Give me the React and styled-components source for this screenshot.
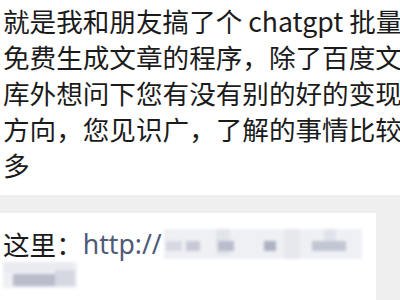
import React from "react";
import styled, { createGlobalStyle } from "styled-components";

const Global = createGlobalStyle`
  html, body { margin: 0; padding: 0; background: #ffffff; }
  body { width: 400px; height: 300px; overflow: hidden; }
`;

const Page = styled.div`
  width: 400px;
  height: 300px;
  overflow: hidden;
  background: #ffffff;
  display: flex;
  flex-direction: column;
  font-family: "Noto Sans CJK SC", "Noto Sans", sans-serif;
`;

const Post = styled.div`
  padding: 3px 0 12px 3px;
  color: #1b1b1b;
  font-size: 26.6px;
  line-height: 36px;
`;

const Line = styled.div`
  white-space: nowrap;
`;

const Band = styled.div`
  height: 18px;
  background: #efefef;
  flex-shrink: 0;
`;

const Lower = styled.div`
  flex: 1;
  display: flex;
  background: #efefef;
`;

const Card = styled.div`
  width: 373px;
  background: #ffffff;
  padding: 13px 0 0 3px;
  color: #1b1b1b;
  font-size: 26.6px;
  line-height: 36px;
  overflow: hidden;
`;

const Row = styled.div`
  display: flex;
  align-items: center;
  white-space: nowrap;
`;

const Link = styled.span`
  color: #4f5b78;
  font-family: "Noto Sans", "Noto Sans CJK SC", sans-serif;
  margin-right: 2px;
`;

const Mosaic = styled.div`
  position: relative;
  width: ${(p) => p.w}px;
  height: ${(p) => p.h}px;
  background: ${(p) => p.bg || "#eef0f4"};
  filter: blur(1.5px);
  flex-shrink: 0;
`;

const Cell = styled.div`
  position: absolute;
  left: ${(p) => p.x}px;
  top: ${(p) => p.y}px;
  width: ${(p) => p.w}px;
  height: ${(p) => p.h}px;
  background: ${(p) => p.c};
`;

const cells1 = [
  { x: 2, y: 12, w: 16, h: 10, c: "#d6d9e2" },
  { x: 22, y: 12, w: 14, h: 10, c: "#c6cad6" },
  { x: 52, y: 0, w: 14, h: 26, c: "#e2e4eb" },
  { x: 54, y: 12, w: 16, h: 10, c: "#b9bdcc" },
  { x: 100, y: 12, w: 12, h: 10, c: "#aeb2c3" },
  { x: 120, y: 0, w: 16, h: 30, c: "#e6e8ee" },
  { x: 148, y: 12, w: 34, h: 10, c: "#c2c6d3" },
  { x: 160, y: 0, w: 12, h: 12, c: "#e0e3ea" },
];

const cells2 = [
  { x: 0, y: 0, w: 70, h: 10, c: "#e9ebf0" },
  { x: 10, y: 12, w: 42, h: 12, c: "#b8bccb" },
  { x: 52, y: 8, w: 20, h: 16, c: "#d5d8e1" },
];

export default function App() {
  return (
    <Page>
      <Global />
      <Post>
        <Line>就是我和朋友搞了个 chatgpt 批量</Line>
        <Line>免费生成文章的程序，除了百度文</Line>
        <Line>库外想问下您有没有别的好的变现</Line>
        <Line>方向，您见识广，了解的事情比较</Line>
        <Line>多</Line>
      </Post>
      <Band />
      <Lower>
        <Card>
          <Row>
            这里：<Link>http://</Link>
            <Mosaic w={198} h={30}>
              {cells1.map((c, i) => (
                <Cell key={i} {...c} />
              ))}
            </Mosaic>
          </Row>
          <Row>
            <Mosaic w={74} h={26} bg="#eef0f4">
              {cells2.map((c, i) => (
                <Cell key={i} {...c} />
              ))}
            </Mosaic>
          </Row>
        </Card>
      </Lower>
    </Page>
  );
}
